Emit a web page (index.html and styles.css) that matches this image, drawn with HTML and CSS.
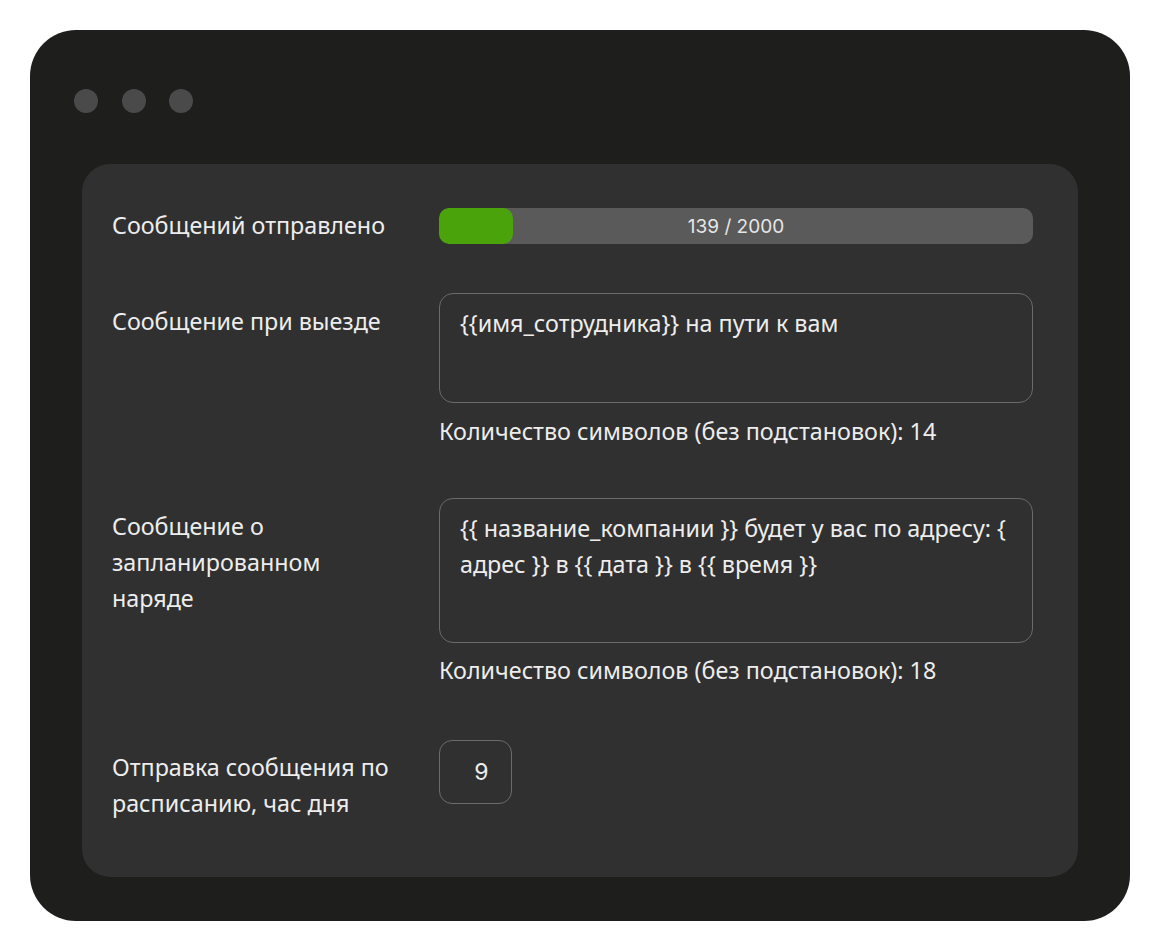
FILE: index.html
```html
<!DOCTYPE html>
<html lang="ru">
<head>
<meta charset="utf-8">
<title>Настройки SMS</title>
<link rel="stylesheet" href="styles.css">
</head>
<body>
<div class="window">
  <div class="window-bar">
    <span class="dot"></span>
    <span class="dot"></span>
    <span class="dot"></span>
  </div>
  <div class="panel">
    <div class="row row-sent">
      <div class="label">Сообщений отправлено</div>
      <div class="control">
        <div class="progress">
          <div class="progress-fill" style="width: 74px"></div>
          <span class="progress-text">139 / 2000</span>
        </div>
      </div>
    </div>

    <div class="row row-departure">
      <div class="label">Сообщение при выезде</div>
      <div class="control">
        <div class="textarea textarea-short">{{имя_сотрудника}} на пути к вам</div>
        <div class="counter">Количество символов (без подстановок): 14</div>
      </div>
    </div>

    <div class="row row-scheduled">
      <div class="label">Сообщение о<br>запланированном<br>наряде</div>
      <div class="control">
        <div class="textarea textarea-tall">{{ название_компании }} будет у вас по адресу: { адрес }} в {{ дата }} в {{ время }}</div>
        <div class="counter">Количество символов (без подстановок): 18</div>
      </div>
    </div>

    <div class="row row-hour">
      <div class="label">Отправка сообщения по<br>расписанию, час дня</div>
      <div class="control">
        <div class="hour-input">9</div>
      </div>
    </div>
  </div>
</div>
</body>
</html>
```

FILE: styles.css
```css
html, body {
  margin: 0;
  padding: 0;
  background: #ffffff;
}

body {
  font-family: "Noto Sans", "Open Sans", sans-serif;
  color: #ededed;
}

/* dark outer frame */
.window {
  margin: 30px 0 0 30px;
  width: 1100px;
  height: 891px;
  box-sizing: border-box;
  background: #1e1e1c;
  border-radius: 46px;
  padding: 59px 52px 0 44px;
}

.window-bar {
  display: flex;
  gap: 23.5px;
  height: 24px;
}

.dot {
  width: 24px;
  height: 24px;
  border-radius: 50%;
  background: #4a4a4a;
}

/* settings card */
.panel {
  margin: 51px 0 0 8px;
  width: 996px;
  height: 713px;
  box-sizing: border-box;
  background: #303030;
  border-radius: 28px;
  padding: 43px 45px 0 30px;
}

.row {
  display: grid;
  grid-template-columns: 327px 594px;
}

.label {
  font-size: 23.3px;
  line-height: 36px;
  color: #ededed;
}

.row-sent .control {
  padding-top: 1px;
}

.row-departure {
  margin-top: 49px;
}

.row-departure .label {
  padding-top: 10px;
}

.row-scheduled {
  margin-top: 49px;
}

.row-scheduled .label {
  padding-top: 10px;
}

.row-hour {
  margin-top: 52px;
}

.row-hour .label {
  padding-top: 9px;
}

.progress {
  position: relative;
  height: 36px;
  border-radius: 10px;
  background: #5a5a5a;
  overflow: hidden;
  display: flex;
  align-items: center;
  justify-content: center;
}

.progress-fill {
  position: absolute;
  left: 0;
  top: 0;
  bottom: 0;
  background: #4aa30a;
  border-radius: 10px;
}

.progress-text {
  position: relative;
  font-family: Inter, "Noto Sans", sans-serif;
  font-size: 19px;
  color: #e6e6e6;
}

.textarea {
  box-sizing: border-box;
  border: 1.5px solid #6b6b6b;
  border-radius: 14px;
  padding: 11px 20px;
  font-size: 23.3px;
  line-height: 36px;
  color: #ededed;
}

.textarea-short {
  height: 110px;
}

.textarea-tall {
  height: 145px;
}

.counter {
  margin-top: 10px;
  font-size: 23.3px;
  line-height: 36px;
  color: #ededed;
}

.row-scheduled .counter {
  margin-top: 9px;
}

.hour-input {
  box-sizing: border-box;
  width: 73px;
  height: 64px;
  border: 1.5px solid #6b6b6b;
  border-radius: 13px;
  display: flex;
  align-items: center;
  justify-content: center;
  padding-left: 12px;
  font-family: Inter, "Noto Sans", sans-serif;
  font-size: 23px;
  color: #ededed;
}
```
